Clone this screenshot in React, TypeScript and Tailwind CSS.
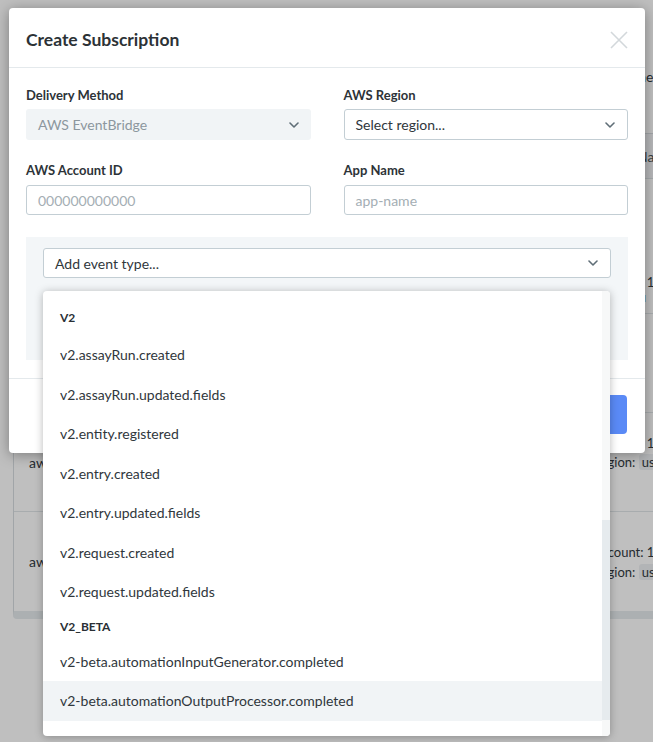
import React from 'react';

const font = { fontFamily: 'Lato, "Open Sans", Arial, sans-serif' };

const Chevron = () => (
  <svg width="10" height="6" viewBox="0 0 10 6" fill="none">
    <polyline points="1,1 5,5 9,1" stroke="#5f6e77" strokeWidth="1.6" strokeLinecap="round" strokeLinejoin="round" />
  </svg>
);

const v2Items = [
  'v2.assayRun.created',
  'v2.assayRun.updated.fields',
  'v2.entity.registered',
  'v2.entry.created',
  'v2.entry.updated.fields',
  'v2.request.created',
  'v2.request.updated.fields',
];

const betaItems = [
  'v2-beta.automationInputGenerator.completed',
  'v2-beta.automationOutputProcessor.completed',
];

const BackgroundPage = () => (
  <div className="flex flex-col w-[653px] text-[14px] text-[#333a3f] whitespace-nowrap">
    {/* page heading row */}
    <div className="h-[133px] flex items-start pt-[66px] pl-[617px]">
      <span>Name</span>
    </div>
    {/* subscriptions table */}
    <div className="ml-[13px] w-[640px] border border-r-0 border-[#d7dde1] rounded-l-[4px] border-b-[8px] border-b-[#e6ebee]">
      <div className="h-[45px] bg-[#f3f5f7] border-b border-[#dde3e6] flex items-center pl-[623px] text-[#4b5358]">
        Na
      </div>
      <div className="h-[135px] border-b border-[#e1e6e9] flex items-end pb-[8px]">
        <div className="pl-[15px] w-[579px] shrink-0">aw</div>
        <div className="flex flex-col text-[13px] leading-[15px] shrink-0">
          <span>Account: 1</span>
          <span>Region: u</span>
        </div>
      </div>
      <div className="h-[99px] border-b border-[#e1e6e9]" />
      <div className="h-[99px] border-b border-[#e1e6e9] flex items-center">
        <div className="pl-[15px] w-[579px] shrink-0">aw</div>
        <div className="flex flex-col text-[13px] leading-[19px] pb-[18px] shrink-0">
          <span>Account: 19</span>
          <span>
            Region: <span className="bg-[#eef1f3] px-[3px] rounded-[3px]">us</span>
          </span>
        </div>
      </div>
      <div className="h-[99px] flex items-center">
        <div className="pl-[15px] w-[579px] shrink-0">aw</div>
        <div className="flex flex-col text-[13px] leading-[20px] shrink-0">
          <span>Account: 19</span>
          <span>
            Region: <span className="bg-[#eef1f3] px-[3px] rounded-[3px]">us</span>
          </span>
        </div>
      </div>
    </div>
  </div>
);

const Field = ({ label, children }: { label: string; children: React.ReactNode }) => (
  <div className="flex flex-col">
    <label className="text-[13px] font-bold text-[#2d3338] leading-[16px] mb-[6px]">{label}</label>
    {children}
  </div>
);

export default function App() {
  return (
    <div className="relative w-[653px] h-[742px] overflow-hidden bg-white" style={font}>
      <BackgroundPage />

      {/* overlay */}
      <div className="absolute inset-0 bg-black/[0.25]" />

      {/* modal */}
      <div className="absolute left-[9px] top-[8px] w-[636px] bg-white rounded-[4px] shadow-[0_2px_14px_rgba(0,0,0,0.35)] flex flex-col">
        <div className="h-[60px] flex items-center justify-between pt-[5px] pl-[17px] pr-[17px] border-b border-[#e4e9ec]">
          <h2 className="text-[17.5px] font-bold text-[#2c3236]">Create Subscription</h2>
          <svg width="18" height="18" viewBox="0 0 18 18" fill="none">
            <path d="M1 1 L17 17 M17 1 L1 17" stroke="#d3d8db" strokeWidth="1.6" />
          </svg>
        </div>

        <div className="px-[17px] pt-[19px] pb-[18px] flex flex-col">
          <div className="grid grid-cols-2 gap-x-[33px] gap-y-[22px]">
            <Field label="Delivery Method">
              <div className="h-[31px] rounded-[3px] bg-[#f1f4f6] flex items-center justify-between pl-[12px] pr-[12px] text-[14px] text-[#8c979e]">
                <span>AWS EventBridge</span>
                <Chevron />
              </div>
            </Field>
            <Field label="AWS Region">
              <div className="h-[31px] rounded-[3px] border border-[#c3ced4] flex items-center justify-between pl-[11px] pr-[12px] text-[14px] text-[#30373c]">
                <span>Select region...</span>
                <Chevron />
              </div>
            </Field>
            <Field label="AWS Account ID">
              <div className="mt-[1px] h-[30px] rounded-[3px] border border-[#c3ced4] flex items-center pl-[11px] text-[14px] text-[#a4aeb4]">
                000000000000
              </div>
            </Field>
            <Field label="App Name">
              <div className="mt-[1px] h-[30px] rounded-[3px] border border-[#c3ced4] flex items-center pl-[11px] text-[14px] text-[#a4aeb4]">
                app-name
              </div>
            </Field>
          </div>

          <div className="mt-[22px] h-[123px] bg-[#f3f6f8] pt-[11px] px-[17px]">
            <div className="h-[30px] rounded-[3px] border border-[#c3ced4] bg-white flex items-center justify-between pl-[11px] pr-[12px] text-[14px] text-[#30373c]">
              <span>Add event type...</span>
              <Chevron />
            </div>
          </div>
        </div>

        <div className="border-t border-[#e4e9ec] pt-[16px] pb-[19px] px-[18px] flex justify-end">
          <button className="h-[39px] w-[110px] rounded-[4px] bg-[#5a8af6] text-white text-[14px] font-bold">
            Create
          </button>
        </div>
      </div>

      {/* event type menu */}
      <div className="absolute left-[43px] top-[291px] w-[567px] h-[445px] bg-white rounded-[4px] shadow-[0_1px_8px_rgba(0,0,0,0.28)] overflow-hidden flex">
        <div className="flex-1 flex flex-col pt-[10px] text-[14px] text-[#30373c]">
          <div className="h-[34px] flex items-center pl-[17px] text-[12px] font-bold text-[#2a3035]">V2</div>
          {v2Items.map((item) => (
            <div key={item} className="h-[39.5px] flex items-center pl-[17px]">
              {item}
            </div>
          ))}
          <div className="h-[30px] flex items-center pl-[17px] text-[12px] font-bold text-[#2a3035]">V2_BETA</div>
          {betaItems.map((item, i) => (
            <div
              key={item}
              className={`h-[39.5px] flex items-center pl-[17px] ${i === 1 ? 'bg-[#f1f4f6]' : ''}`}
            >
              {item}
            </div>
          ))}
        </div>
        {/* scrollbar */}
        <div className="w-[8px] bg-[#f7f8f8] flex flex-col pt-[229px] pb-[16px]">
          <div className="flex-1 bg-[#e6ebee]" />
        </div>
      </div>
    </div>
  );
}
